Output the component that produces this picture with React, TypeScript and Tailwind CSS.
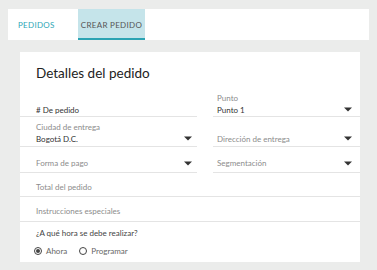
import type { ReactNode } from 'react';

function Caret() {
    return (
        <svg width="8" height="5" viewBox="0 0 8 5" className="shrink-0">
            <path d="M0 0.5 H8 L4 4.5 Z" fill="#333" />
        </svg>
    );
}

function Row({ children, className = '' }: { children: ReactNode; className?: string }) {
    return <div className={`flex border-b border-[#e4e4e4] ${className}`}>{children}</div>;
}

function Radio({ checked, label }: { checked?: boolean; label: string }) {
    return (
        <div className="flex items-center gap-[4px]">
            <span className="flex h-[8px] w-[8px] items-center justify-center rounded-full border border-[#444]">
                {checked && <span className="h-[4px] w-[4px] rounded-full bg-[#444]" />}
            </span>
            <span className="text-[#666]">{label}</span>
        </div>
    );
}

export default function App() {
    return (
        <div
            className="h-[270px] w-[377px] overflow-hidden bg-[#ebeceb] text-[8px] leading-[12px]"
            style={{ fontFamily: 'Lato, "Open Sans", sans-serif' }}
        >
            {/* tabs */}
            <div className="ml-[8px] mt-[9px] flex h-[31px] w-[361px] bg-white">
                <div className="flex w-[70px] items-center pl-[10px] text-[8px] tracking-[0.3px] text-[#2fa7b6]">
                    PEDIDOS
                </div>
                <div className="flex w-[67px] items-center justify-center border-b-2 border-[#2aa3b3] bg-[#c5e4ea] pt-[2px] text-[8px] tracking-[0.3px] text-[#555]">
                    CREAR PEDIDO
                </div>
            </div>

            {/* card */}
            <div className="ml-[20px] mt-[12px] h-[210px] w-[340px] bg-white">
                <h1 className="h-[30px] pl-[16px] pt-[11px] text-[13.5px] leading-[20px] text-[#222]">
                    Detalles del pedido
                </h1>

                <div className="grid grid-cols-[177px_147px] gap-x-[16px]">
                    <Row className="h-[35px] items-end pl-[16px] text-[#333]">
                        # De pedido
                    </Row>
                    <Row className="h-[35px] items-end justify-between pl-[4px] pr-[8px]">
                        <div className="flex flex-col">
                            <span className="text-[#8c8c8c]">Punto</span>
                            <span className="text-[#333]">Punto 1</span>
                        </div>
                        <span className="mb-[4px]"><Caret /></span>
                    </Row>

                    <Row className="h-[30px] items-end justify-between pb-[1px] pl-[16px] pr-[5px]">
                        <div className="flex flex-col">
                            <span className="text-[#8c8c8c]">Ciudad de entrega</span>
                            <span className="text-[#333]">Bogotá D.C.</span>
                        </div>
                        <span className="mb-[4px]"><Caret /></span>
                    </Row>
                    <Row className="h-[30px] items-end justify-between pb-[1px] pl-[4px] pr-[8px]">
                        <span className="text-[#8c8c8c]">Dirección de entrega</span>
                        <span className="mb-[4px]"><Caret /></span>
                    </Row>

                    <Row className="h-[26px] items-end justify-between pb-[3px] pl-[16px] pr-[5px]">
                        <span className="text-[#8c8c8c]">Forma de pago</span>
                        <span className="mb-[3px]"><Caret /></span>
                    </Row>
                    <Row className="h-[26px] items-end justify-between pb-[3px] pl-[4px] pr-[8px]">
                        <span className="text-[#8c8c8c]">Segmentación</span>
                        <span className="mb-[3px]"><Caret /></span>
                    </Row>
                </div>

                <Row className="h-[24px] items-end pb-[3px] pl-[16px] text-[#8c8c8c]">Total del pedido</Row>
                <Row className="h-[25px] items-end pb-[4px] pl-[16px] text-[#8c8c8c]">Instrucciones especiales</Row>

                <div className="pl-[16px] pt-[5px] text-[#444]">¿A qué hora se debe realizar?</div>
                <div className="mt-[6px] flex gap-[12px] pl-[14px]">
                    <Radio checked label="Ahora" />
                    <Radio label="Programar" />
                </div>
            </div>
        </div>
    );
}
